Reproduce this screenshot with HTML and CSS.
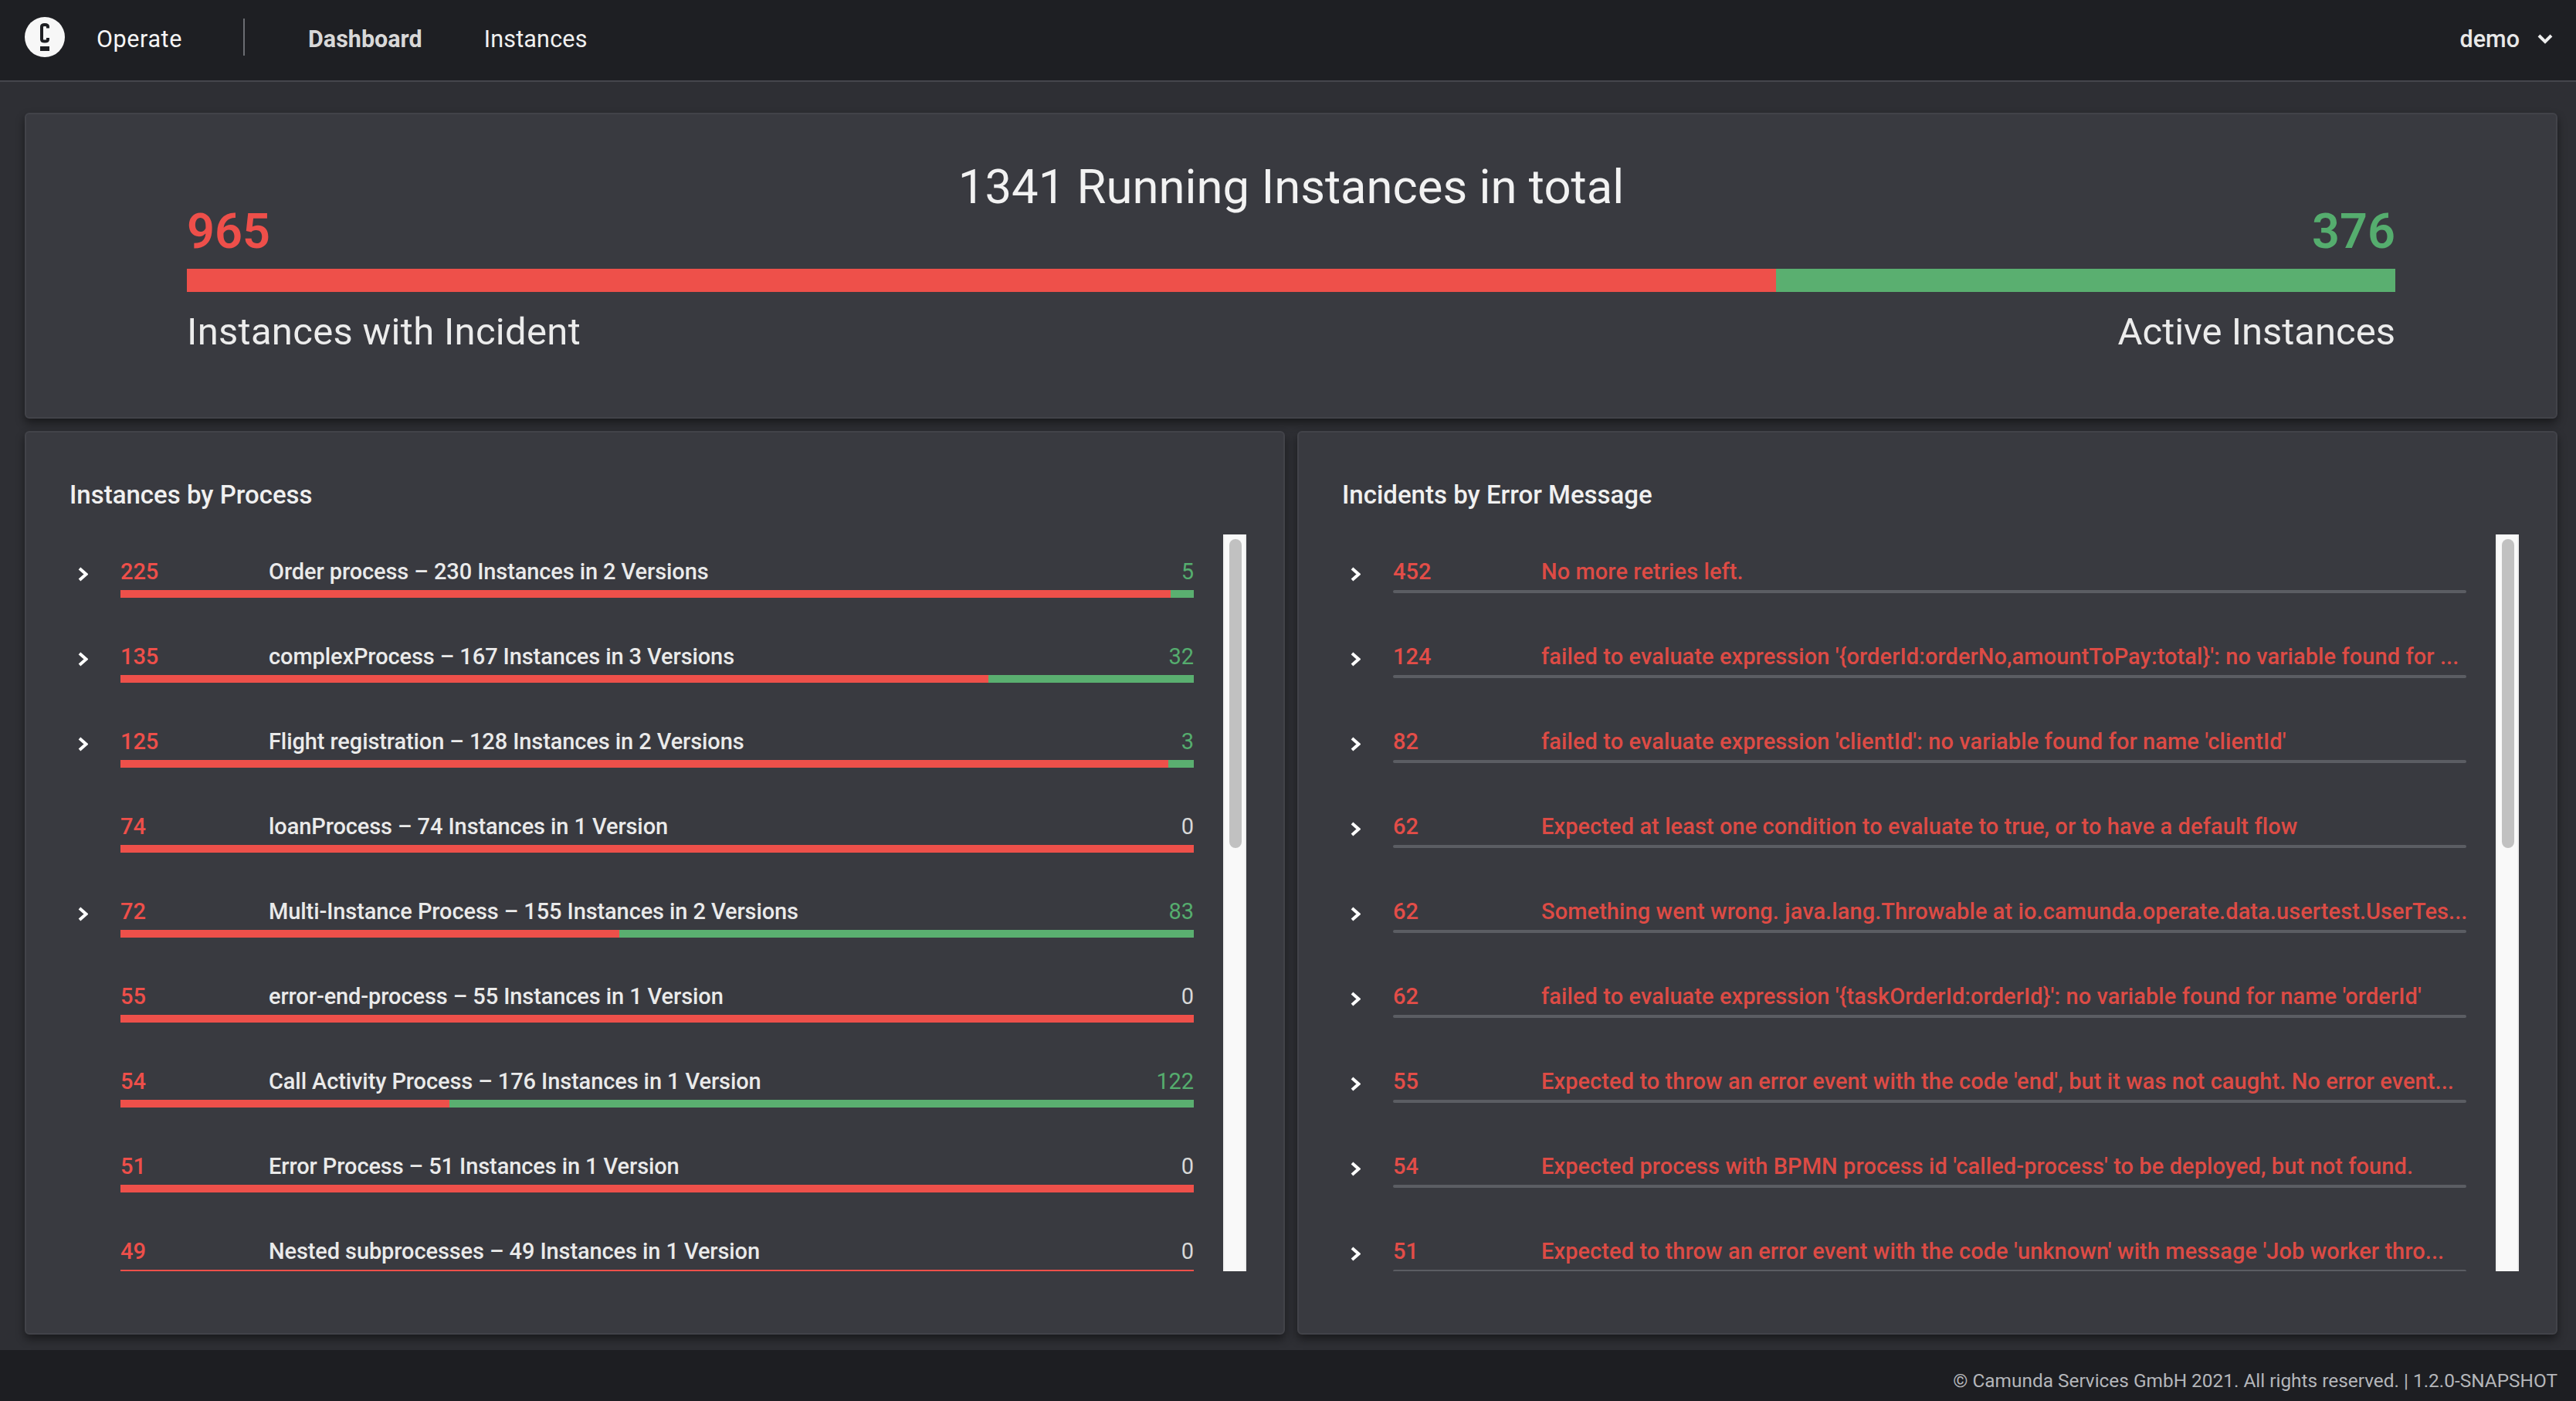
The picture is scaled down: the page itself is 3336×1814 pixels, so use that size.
FILE: index.html
```html
<!DOCTYPE html>
<html lang="en">

<head>
    <meta charset="UTF-8">
    <meta name="viewport" content="width=device-width, initial-scale=1.0">
    <title>Operate - Dashboard</title>
    <link rel="stylesheet" href="styles.css">
</head>

<body>
    <svg class="defs" width="0" height="0">
        <symbol id="chevron" viewBox="0 0 13 19">
            <polyline points="2,2 10.5,9.5 2,17" fill="none" stroke="#fff" stroke-width="4"></polyline>
        </symbol>
    </svg>

    <header class="topbar">
        <svg class="logo" viewBox="0 0 52 52">
            <circle cx="26" cy="26" r="26" fill="#f7f7f7"></circle>
            <path d="M30 14.5 V12.5 Q30 10 26 10 Q22 10 22 12.5 V29 Q22 31.500 26 31.500 Q30 31.500 30 29 V27" fill="none" stroke="#1e1f23" stroke-width="4"></path>
            <rect x="20" y="38" width="12" height="6" fill="#1e1f23"></rect>
        </svg>
        <span class="brand">Operate</span>
        <span class="divider"></span>
        <a class="nav-link active">Dashboard</a>
        <a class="nav-link">Instances</a>
        <span class="user">demo</span>
        <svg class="user-chevron" viewBox="0 0 20 14">
            <polyline points="2,3 10,11 18,3" fill="none" stroke="#eee" stroke-width="4"></polyline>
        </svg>
    </header>

    <main class="content">
        <section class="panel summary">
            <h1 class="summary-title">1341 Running Instances in total</h1>
            <div class="summary-counts">
                <span class="big-count red">965</span>
                <span class="big-count green">376</span>
            </div>
            <div class="bar big">
                <div class="bar-red" style="width: 71.96%"></div>
            </div>
            <div class="summary-labels">
                <span class="label-incident">Instances with Incident</span>
                <span>Active Instances</span>
            </div>
        </section>

        <div class="columns">
            <section class="panel">
                <h2 class="panel-title">Instances by Process</h2>
                <div class="list-wrap">
                    <div class="list">
                        <div class="row">
                            <div class="toggle"><svg class="chevron"><use href="#chevron"></use></svg></div>
                            <div class="row-body">
                                <div class="row-text"><span class="count red">225</span><span class="name">Order process – 230 Instances in 2 Versions</span><span class="active green">5</span></div>
                                <div class="bar"><div class="bar-red" style="width: 97.83%"></div></div>
                            </div>
                        </div>
                        <div class="row">
                            <div class="toggle"><svg class="chevron"><use href="#chevron"></use></svg></div>
                            <div class="row-body">
                                <div class="row-text"><span class="count red">135</span><span class="name">complexProcess – 167 Instances in 3 Versions</span><span class="active green">32</span></div>
                                <div class="bar"><div class="bar-red" style="width: 80.84%"></div></div>
                            </div>
                        </div>
                        <div class="row">
                            <div class="toggle"><svg class="chevron"><use href="#chevron"></use></svg></div>
                            <div class="row-body">
                                <div class="row-text"><span class="count red">125</span><span class="name">Flight registration – 128 Instances in 2 Versions</span><span class="active green">3</span></div>
                                <div class="bar"><div class="bar-red" style="width: 97.66%"></div></div>
                            </div>
                        </div>
                        <div class="row">
                            <div class="toggle"></div>
                            <div class="row-body">
                                <div class="row-text"><span class="count red">74</span><span class="name">loanProcess – 74 Instances in 1 Version</span><span class="active">0</span></div>
                                <div class="bar"><div class="bar-red" style="width: 100%"></div></div>
                            </div>
                        </div>
                        <div class="row">
                            <div class="toggle"><svg class="chevron"><use href="#chevron"></use></svg></div>
                            <div class="row-body">
                                <div class="row-text"><span class="count red">72</span><span class="name">Multi-Instance Process – 155 Instances in 2 Versions</span><span class="active green">83</span></div>
                                <div class="bar"><div class="bar-red" style="width: 46.45%"></div></div>
                            </div>
                        </div>
                        <div class="row">
                            <div class="toggle"></div>
                            <div class="row-body">
                                <div class="row-text"><span class="count red">55</span><span class="name">error-end-process – 55 Instances in 1 Version</span><span class="active">0</span></div>
                                <div class="bar"><div class="bar-red" style="width: 100%"></div></div>
                            </div>
                        </div>
                        <div class="row">
                            <div class="toggle"></div>
                            <div class="row-body">
                                <div class="row-text"><span class="count red">54</span><span class="name">Call Activity Process – 176 Instances in 1 Version</span><span class="active green">122</span></div>
                                <div class="bar"><div class="bar-red" style="width: 30.68%"></div></div>
                            </div>
                        </div>
                        <div class="row">
                            <div class="toggle"></div>
                            <div class="row-body">
                                <div class="row-text"><span class="count red">51</span><span class="name">Error Process – 51 Instances in 1 Version</span><span class="active">0</span></div>
                                <div class="bar"><div class="bar-red" style="width: 100%"></div></div>
                            </div>
                        </div>
                        <div class="row">
                            <div class="toggle"></div>
                            <div class="row-body">
                                <div class="row-text"><span class="count red">49</span><span class="name">Nested subprocesses – 49 Instances in 1 Version</span><span class="active">0</span></div>
                                <div class="bar"><div class="bar-red" style="width: 100%"></div></div>
                            </div>
                        </div>
                    </div>
                    <div class="scrollbar"><div class="thumb"></div></div>
                </div>
            </section>

            <section class="panel">
                <h2 class="panel-title">Incidents by Error Message</h2>
                <div class="list-wrap">
                    <div class="list">
                        <div class="row">
                            <div class="toggle"><svg class="chevron"><use href="#chevron"></use></svg></div>
                            <div class="row-body">
                                <div class="row-text error"><span class="count">452</span><span class="name">No more retries left.</span></div>
                                <div class="line"></div>
                            </div>
                        </div>
                        <div class="row">
                            <div class="toggle"><svg class="chevron"><use href="#chevron"></use></svg></div>
                            <div class="row-body">
                                <div class="row-text error"><span class="count">124</span><span class="name">failed to evaluate expression '{orderId:orderNo,amountToPay:total}': no variable found for ...</span></div>
                                <div class="line"></div>
                            </div>
                        </div>
                        <div class="row">
                            <div class="toggle"><svg class="chevron"><use href="#chevron"></use></svg></div>
                            <div class="row-body">
                                <div class="row-text error"><span class="count">82</span><span class="name">failed to evaluate expression 'clientId': no variable found for name 'clientId'</span></div>
                                <div class="line"></div>
                            </div>
                        </div>
                        <div class="row">
                            <div class="toggle"><svg class="chevron"><use href="#chevron"></use></svg></div>
                            <div class="row-body">
                                <div class="row-text error"><span class="count">62</span><span class="name">Expected at least one condition to evaluate to true, or to have a default flow</span></div>
                                <div class="line"></div>
                            </div>
                        </div>
                        <div class="row">
                            <div class="toggle"><svg class="chevron"><use href="#chevron"></use></svg></div>
                            <div class="row-body">
                                <div class="row-text error"><span class="count">62</span><span class="name">Something went wrong. java.lang.Throwable at io.camunda.operate.data.usertest.UserTes...</span></div>
                                <div class="line"></div>
                            </div>
                        </div>
                        <div class="row">
                            <div class="toggle"><svg class="chevron"><use href="#chevron"></use></svg></div>
                            <div class="row-body">
                                <div class="row-text error"><span class="count">62</span><span class="name">failed to evaluate expression '{taskOrderId:orderId}': no variable found for name 'orderId'</span></div>
                                <div class="line"></div>
                            </div>
                        </div>
                        <div class="row">
                            <div class="toggle"><svg class="chevron"><use href="#chevron"></use></svg></div>
                            <div class="row-body">
                                <div class="row-text error"><span class="count">55</span><span class="name">Expected to throw an error event with the code 'end', but it was not caught. No error event...</span></div>
                                <div class="line"></div>
                            </div>
                        </div>
                        <div class="row">
                            <div class="toggle"><svg class="chevron"><use href="#chevron"></use></svg></div>
                            <div class="row-body">
                                <div class="row-text error"><span class="count">54</span><span class="name">Expected process with BPMN process id 'called-process' to be deployed, but not found.</span></div>
                                <div class="line"></div>
                            </div>
                        </div>
                        <div class="row">
                            <div class="toggle"><svg class="chevron"><use href="#chevron"></use></svg></div>
                            <div class="row-body">
                                <div class="row-text error"><span class="count">51</span><span class="name">Expected to throw an error event with the code 'unknown' with message 'Job worker thro...</span></div>
                                <div class="line"></div>
                            </div>
                        </div>
                    </div>
                    <div class="scrollbar"><div class="thumb"></div></div>
                </div>
            </section>
        </div>
    </main>

    <footer class="footer">© Camunda Services GmbH 2021. All rights reserved. | 1.2.0-SNAPSHOT</footer>
</body>

</html>
```

FILE: styles.css
```css
* {
    box-sizing: border-box;
}

body {
    font-family: Roboto, "Noto Sans", sans-serif;
    margin: 0;
    height: 100vh;
    display: flex;
    flex-direction: column;
    background-color: #2e2f34;
    color: #f0f0f0;
    overflow: hidden;
}

.defs {
    position: absolute;
}

.red {
    color: #ee4f4a;
}

.green {
    color: #55ad6e;
}

/* top bar */
.topbar {
    height: 106px;
    flex-shrink: 0;
    padding-bottom: 8px;
    display: flex;
    align-items: center;
    background-color: #1e1f23;
    border-bottom: 2px solid #45464c;
    font-size: 30.5px;
}

.logo {
    width: 52px;
    height: 52px;
    margin-left: 32px;
}

.brand {
    margin-left: 41px;
    margin-top: 4px;
    width: 190px;
    letter-spacing: 0.6px;
    color: #f5f5f5;
}

.divider {
    width: 2px;
    height: 48px;
    background-color: #6b6d72;
}

.nav-link {
    margin-left: 80px;
    margin-top: 4px;
    letter-spacing: 0.2px;
    color: #f0f0f0;
}

.nav-link.active {
    margin-left: 82px;
    letter-spacing: 0;
    font-weight: 700;
}

.user {
    margin-left: auto;
    margin-top: 4px;
    font-weight: 500;
    color: #e8e8e8;
}

.user-chevron {
    width: 20px;
    height: 14px;
    margin: 3px 30px 0 23px;
}

/* main area */
.content {
    flex: 1;
    min-height: 0;
    padding: 40px 24px 20px 32px;
    display: flex;
    flex-direction: column;
    gap: 16px;
}

.panel {
    background-color: #393a40;
    border: 2px solid #424349;
    border-radius: 6px;
    box-shadow: 0 6px 12px rgba(0, 0, 0, 0.45);
}

.summary {
    height: 396px;
    flex-shrink: 0;
    padding: 0 208px;
}

.summary-title {
    margin: 58px 0 0;
    font-size: 61.6px;
    font-weight: 400;
    line-height: 72px;
    text-align: center;
    color: #f2f2f2;
}

.summary-counts {
    display: flex;
    justify-content: space-between;
    align-items: center;
    height: 72px;
    margin: -14px 0 12px;
}

.big-count {
    font-size: 63px;
    font-weight: 600;
    line-height: 72px;
}

.bar {
    height: 10px;
    background-color: #5aaf70;
}

.bar.big {
    height: 30px;
}

.bar-red {
    height: 100%;
    background-color: #ee504a;
}

.summary-labels {
    display: flex;
    justify-content: space-between;
    margin-top: 22px;
    font-size: 49px;
    line-height: 60px;
    color: #ececec;
}

.label-incident {
    letter-spacing: 0.3px;
}

.columns {
    flex: 1;
    min-height: 0;
    display: grid;
    grid-template-columns: minmax(0, 1fr) minmax(0, 1fr);
    gap: 16px;
}

.panel-title {
    margin: 0;
    padding: 61px 0 0 56px;
    font-size: 33px;
    font-weight: 500;
    line-height: 40px;
    color: #f0f0f0;
}

.list-wrap {
    display: flex;
    height: 954px;
    margin: 31px 48px 0 56px;
}

.list {
    flex: 1;
    min-width: 0;
    overflow: hidden;
    padding-right: 38px;
}

.row {
    display: flex;
    height: 110px;
    padding-top: 28px;
}

.toggle {
    width: 66px;
    flex-shrink: 0;
    padding: 14px 0 0 11px;
}

.chevron {
    display: block;
    width: 13px;
    height: 19px;
}

.row-body {
    flex: 1;
    min-width: 0;
}

.row-text {
    display: flex;
    height: 40px;
    margin-bottom: 4px;
    font-size: 29px;
    font-weight: 500;
    letter-spacing: -0.1px;
    line-height: 40px;
    white-space: nowrap;
    color: #eaeaea;
}

.row-text.error {
    letter-spacing: 0.08px;
    color: #dd4b45;
}

.count {
    width: 192px;
    flex-shrink: 0;
}

.error .count {
    color: #e34d48;
}

.name {
    flex: 1;
    min-width: 0;
    overflow: hidden;
}

.active {
    font-weight: 400;
    color: #d8d8d8;
}

.active.green {
    color: #55ad6e;
}

.line {
    height: 4px;
    margin-top: 2px;
    border-radius: 2px;
    background-color: #5b5d63;
}

.scrollbar {
    width: 30px;
    flex-shrink: 0;
    padding: 6px 6px 0 8px;
    background-color: #f9f9f9;
    border-left: 2px solid #f1f1f1;
    border-right: 2px solid #eeeeee;
}

.thumb {
    height: 400px;
    width: 16px;
    margin-left: -2px;
    border-radius: 8px;
    background-color: #c1c1c1;
}

.footer {
    height: 66px;
    flex-shrink: 0;
    padding: 20px 24px 0 0;
    text-align: right;
    font-size: 24.4px;
    line-height: 40px;
    background-color: #1d1e22;
    color: #b4b6ba;
}
```
